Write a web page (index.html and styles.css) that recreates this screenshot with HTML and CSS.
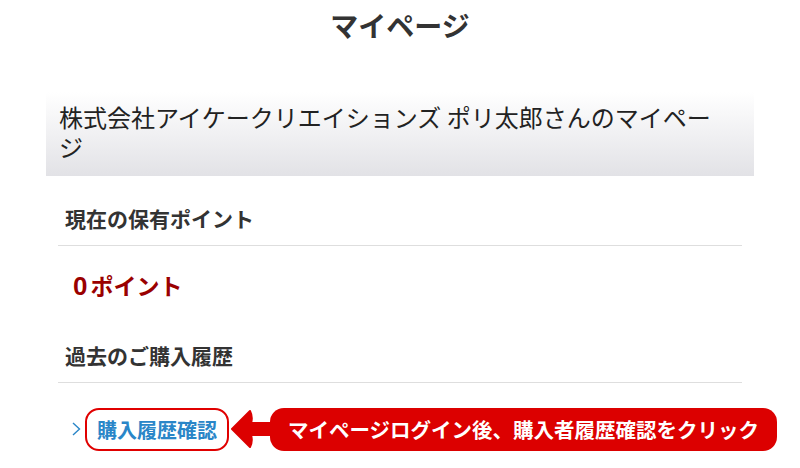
FILE: index.html
```html
<!DOCTYPE html>
<html lang="ja">
<head>
    <meta charset="UTF-8">
    <meta name="viewport" content="width=device-width, initial-scale=1.0">
    <title>マイページ</title>
    <link rel="stylesheet" href="styles.css">
</head>
<body>
    <div class="page">
        <h1 class="page-title">マイページ</h1>

        <div class="welcome-box">
            <p class="welcome-text">株式会社アイケークリエイションズ ポリ太郎さんのマイページ</p>
        </div>

        <div class="sections">
            <h2 class="section-title">現在の保有ポイント</h2>
            <div class="points">
                <span class="points-num">0</span><span class="points-unit">ポイント</span>
            </div>

            <h2 class="section-title">過去のご購入履歴</h2>
            <div class="history-row">
                <svg class="chevron" width="9" height="14" viewBox="0 0 9 14">
                    <polyline points="1,1 7.5,7 1,13" fill="none" stroke="#2a86c8" stroke-width="1.4"/>
                </svg>
                <a href="#" class="history-link">購入履歴確認</a>
                <svg class="callout-arrow" width="42" height="44" viewBox="0 0 42 44">
                    <path d="M2 22 L20 4 Q23 10 21 16 L42 16 L42 28 L21 28 Q23 34 20 40 Z" fill="#dc0000" stroke="#dc0000" stroke-width="2" stroke-linejoin="round"/>
                </svg>
                <div class="callout">マイページログイン後、購入者履歴確認をクリック</div>
            </div>
        </div>
    </div>
</body>
</html>
```

FILE: styles.css
```css
* {
    margin: 0;
    padding: 0;
    box-sizing: border-box;
}

body {
    font-family: "Noto Sans CJK JP", "Noto Sans", sans-serif;
    background: #fff;
    color: #333;
    overflow: hidden;
}

.page {
    width: 708px;
    margin: 0 auto;
}

.page-title {
    text-align: center;
    font-size: 28px;
    line-height: 50px;
    font-weight: bold;
    color: #333;
    margin-bottom: 42px;
}

.welcome-box {
    background: linear-gradient(#ffffff, #e2e2e6);
    padding: 10px 40px 14px 13px;
}

.welcome-text {
    font-size: 24px;
    line-height: 30px;
    color: #222;
}

.sections {
    margin: 0 12px;
}

.section-title {
    font-size: 21px;
    line-height: 30px;
    font-weight: bold;
    color: #333;
    padding: 27px 0 12px 7px;
    border-bottom: 1px solid #dedede;
}

.points {
    display: flex;
    align-items: baseline;
    height: 67px;
    padding: 24px 0 0 15px;
    color: #9a0000;
    font-weight: bold;
}

.points-num {
    font-family: "Liberation Sans", Arial, sans-serif;
    font-size: 26px;
    line-height: 30px;
    margin-right: 3px;
}

.points-unit {
    font-size: 23px;
    line-height: 30px;
}

.history-row {
    display: flex;
    align-items: center;
    padding: 24px 0 0 14px;
}

.chevron {
    flex-shrink: 0;
    margin-right: 4px;
}

.history-link {
    flex-shrink: 0;
    display: block;
    border: 2px solid #e00000;
    border-radius: 14px;
    padding: 0 10px;
    font-size: 20px;
    line-height: 39px;
    font-weight: bold;
    color: #2a86c8;
    text-decoration: none;
}

.callout-arrow {
    flex-shrink: 0;
    margin-left: 1px;
}

.callout {
    flex-shrink: 0;
    width: 507px;
    margin-left: -2px;
    background: #dc0000;
    border-radius: 14px;
    color: #fff;
    font-size: 20.5px;
    line-height: 43px;
    font-weight: bold;
    text-align: center;
}
```
